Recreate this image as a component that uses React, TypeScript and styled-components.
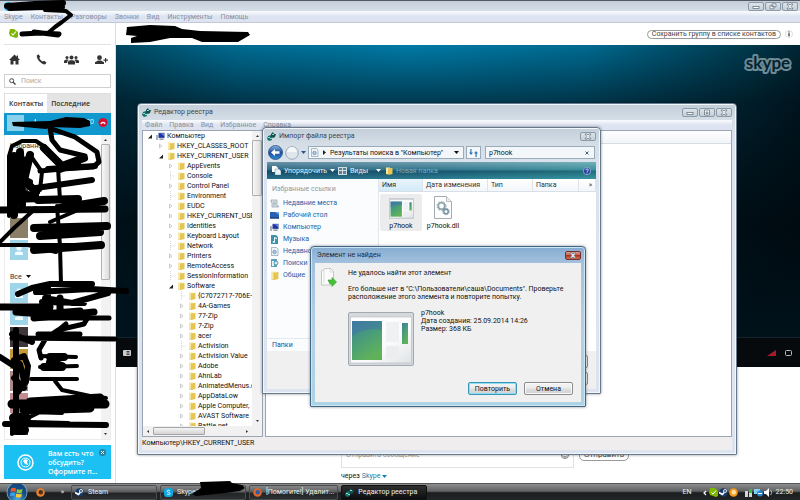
import React from "react";
import styled, { createGlobalStyle, css } from "styled-components";

const Global = createGlobalStyle`
  * { box-sizing: border-box; }
  body { margin: 0; font-family: Roboto, "Noto Sans", sans-serif; font-size: 7px; line-height: 10px; color: #111; overflow: hidden; }
  button, input { font: inherit; color: inherit; margin: 0; padding: 0; border: 0; background: none; outline: 0; white-space: nowrap; }
  svg { display: block; flex: none; }
  ul { list-style: none; margin: 0; padding: 0; }
  p, h2, h3 { margin: 0; font-weight: 400; font-size: 7px; }
`;

const Desktop = styled.div`
  position: relative;
  display: flex;
  flex-direction: column;
  height: 100vh;
  overflow: hidden;
  background: #fff;
`;

/* ---------- shared window parts ---------- */

const Frame = styled.section<{ $x: number; $y: number; $w: number; $h: number; $active?: boolean }>`
  position: absolute;
  left: ${(p) => p.$x}px;
  top: ${(p) => p.$y}px;
  width: ${(p) => p.$w}px;
  height: ${(p) => p.$h}px;
  display: flex;
  flex-direction: column;
  padding: 0 4px 4px;
  overflow: hidden;
  border: 1px solid ${(p) => (p.$active ? "#3f6886" : "#65788c")};
  border-radius: 4px 4px 1px 1px;
  box-shadow: inset 0 0 0 1px ${(p) => (p.$active ? "#cbe6f2" : "#f2f7fb")}, 0 0 3px rgba(0, 0, 0, 0.45);
  background: ${(p) =>
    p.$active
      ? "linear-gradient(#86acd0, #a3c1de 16px, #b5cfe6 50%, #acd3e4)"
      : "linear-gradient(#c2ced9, #d5dee7 16px, #dbe3ee 40px, #dde4f0)"};
`;

const TitleBar = styled.header<{ $h: number }>`
  display: flex;
  align-items: center;
  gap: 3px;
  height: ${(p) => p.$h}px;
  flex: none;
  color: #3b4753;
`;

const Title = styled.h2`
  flex: 1;
  white-space: nowrap;
`;

const WinButtons = styled.div`
  display: flex;
  gap: 1px;
`;

const WinButton = styled.button<{ $danger?: boolean }>`
  display: grid;
  place-items: center;
  width: 16px;
  height: 9px;
  border: 1px solid ${(p) => (p.$danger ? "#7c2f2a" : "#8b99a8")};
  border-radius: 2px;
  background: ${(p) =>
    p.$danger ? "linear-gradient(#dba39a, #c4594a 45%, #ae3422 50%, #cf6f52)" : "linear-gradient(#dde4ea, #c4cfd9)"};
`;

const MenuBar = styled.nav<{ $pad: number; $gap: number; $h: number }>`
  display: flex;
  align-items: center;
  gap: ${(p) => p.$gap}px;
  height: ${(p) => p.$h}px;
  padding-left: ${(p) => p.$pad}px;
  flex: none;
  color: #8a8f9c;
  background: linear-gradient(#fafcfe, #dde3f0 50%, #dde3f0);
`;

function Glyph({ kind }: { kind: "min" | "max" | "restore" | "close" }) {
  return (
    <svg width="8" height="7" viewBox="0 0 8 7" fill="#fff" stroke="#6a7683" strokeWidth="0.8">
      {kind === "min" && <rect x="1" y="3.5" width="6" height="2" />}
      {kind === "max" && <path d="M1.5 1h5v5h-5zM3 3h2v1.5H3z" />}
      {kind === "restore" && <path d="M3 .8h4v3H3zM1 2.8h4v3H1z" />}
      {kind === "close" && <path d="M1 1h2l1 1.2L5 1h2L5.2 3.5 7 6H5L4 4.8 3 6H1l1.8-2.5z" />}
    </svg>
  );
}

function WindowControls({ middle = "max" }: { middle?: "max" | "restore" }) {
  return (
    <WinButtons>
      <WinButton aria-label="Свернуть"><Glyph kind="min" /></WinButton>
      <WinButton aria-label="Развернуть"><Glyph kind={middle} /></WinButton>
      <WinButton aria-label="Закрыть"><Glyph kind="close" /></WinButton>
    </WinButtons>
  );
}

/* ---------- icons ---------- */

const RegIcon = () => (
  <svg width="9" height="9" viewBox="0 0 9 9">
    <path d="M1 4l3-1 1 1v4L2 9 0 7z" fill="#1b6f6c" />
    <path d="M4 2l2-2 1 2 2 0-1 3-2 1-2-1z" fill="#15514f" />
    <path d="M1 5h2v1H1zM3 6h2v1H3zM5 2h2v1H5z" fill="#7fe0cf" />
  </svg>
);
const Folder = ({ s = 8 }: { s?: number }) => (
  <svg width={s} height={s} viewBox="0 0 8 8">
    <path d="M1 0.500H5V7H1z" fill="#f7e9a4" />
    <path d="M3.500 1.500L7.500 0.800V7L3.500 8z" fill="#e6c550" />
    <path d="M1 7L3.500 8V1.500" fill="none" stroke="#d2ae3e" strokeWidth=".5" />
  </svg>
);
const Computer = () => (
  <svg width="9" height="9" viewBox="0 0 9 9">
    <path d="M0 3h2v5H0z" fill="#a9b2ba" />
    <path d="M2.500 1h6v5h-6z" fill="#2231a8" stroke="#8ea0c0" strokeWidth=".6" />
    <path d="M5 1.500h3v2.500z" fill="#6f8cf0" />
    <path d="M4 6.500h3l1 1.500H3z" fill="#9aa3ac" />
  </svg>
);
const Caret = ({ color = "#111" }: { color?: string }) => (
  <svg width="5" height="3" viewBox="0 0 5 3"><path d="M0 0h5L2.500 3z" fill={color} /></svg>
);
const PlaceIcon = ({ kind }: { kind: string }) => {
  if (kind === "folder") return <Folder s={9} />;
  if (kind === "computer") return <Computer />;
  return (
    <svg width="9" height="9" viewBox="0 0 9 9">
      {kind === "recent" && <path d="M1 1h6v6h1.500v1H2V3H1z" fill="#dce5ea" stroke="#8d9ca6" strokeWidth=".7" />}
      {kind === "recent" && <path d="M3 3h3M3 4.500h3M3 6h3" stroke="#8d9ca6" strokeWidth=".6" />}
      {kind === "desktop" && <><path d="M0 1h9v6.500H0z" fill="#2761b4" /><path d="M0 6.500h9v1H0z" fill="#16325d" /><path d="M5 1h4v3z" fill="#6da5e0" /></>}
      {kind === "music" && <><path d="M1 0h5l2 2v7H1z" fill="#3d90a8" /><path d="M4 2l3 1v1L5 3.500V7a1.200 1 0 1 1-1-1z" fill="#e5fafd" /></>}
      {kind === "changed" && <><path d="M1.500.5h5l1.500 1.500v6.500h-6.500z" fill="#eef4f8" stroke="#8ba0b0" strokeWidth=".7" /><circle cx="4.500" cy="5" r="1.800" fill="#a7c6dd" stroke="#5c87a8" strokeWidth=".6" /></>}
      {kind === "search" && <><path d="M1 0h6v8H1z" fill="#5fa3b8" /><path d="M2 2h2v5H2z" fill="#e3f4f8" /><circle cx="6" cy="4" r="2" fill="#d5ecf7" stroke="#357693" strokeWidth=".7" /></>}
    </svg>
  );
};

/* ---------- Skype ---------- */

const SkypeWindow = styled.main`
  flex: 1;
  min-height: 0;
  display: flex;
  flex-direction: column;
`;
const SkypeTitle = styled.header`
  display: flex;
  align-items: center;
  justify-content: space-between;
  height: 11px;
  flex: none;
  padding: 0 2px 0 4px;
  border-top: 1px solid #545b66;
  background: linear-gradient(#c3ced9, #d7dfe8);
`;
const SkypeBody = styled.div`
  display: flex;
  flex: 1;
  min-height: 0;
  border-top: 1px solid #c3c9d4;
`;
const Sidebar = styled.aside`
  width: 116px;
  flex: none;
  display: flex;
  flex-direction: column;
  padding: 0 4px 4px;
  border-right: 1px solid #dcdcdc;
`;
const Status = styled.div`
  height: 22px;
  flex: none;
  display: flex;
  align-items: center;
  padding-left: 5px;
  border-bottom: 1px solid #e2e2e2;
`;
const IconNav = styled.nav`
  display: flex;
  align-items: center;
  justify-content: space-between;
  height: 29px;
  flex: none;
  padding: 0 3px 0 5px;
`;
const IconButton = styled.button`
  display: grid;
  place-items: center;
`;
const SearchLabel = styled.label`
  display: flex;
  align-items: center;
  gap: 5px;
  height: 14px;
  flex: none;
  padding-left: 4px;
  border: 1px solid #d0d0d0;
  input { width: 80px; }
  input::placeholder { color: #aaa; opacity: 1; }
`;
const Tabs = styled.div`
  display: flex;
  height: 20px;
  flex: none;
  margin-top: 5px;
  border: 1px solid #e0e0e0;
  border-bottom: 0;
`;
const Tab = styled.button<{ $on?: boolean }>`
  flex: ${(p) => (p.$on ? "none" : 1)};
  padding: 0 4px;
  text-align: left;
  font-family: "Open Sans", "Noto Sans", sans-serif;
  font-weight: 600;
  color: #333;
  background: ${(p) => (p.$on ? "#fff" : "#e4e4e4")};
`;
const CallRow = styled.div`
  display: flex;
  align-items: center;
  justify-content: space-between;
  height: 22px;
  flex: none;
  padding: 0 3px 4px 3px;
  color: #d4effa;
  background: #1198cf;
`;
const Contacts = styled.div`
  flex: 1;
  min-height: 0;
  display: flex;
  border: 1px solid #ececec;
  border-top: 0;
`;
const ContactScroll = styled.div`
  flex: 1;
  min-width: 0;
  overflow: hidden;
  padding: 4px 0 0 5px;
`;
const GroupTitle = styled.h3`
  display: flex;
  align-items: center;
  gap: 4px;
  height: 13px;
  color: #333;
`;
const AvatarList = styled.ul`
  display: grid;
  gap: 2px;
  margin-bottom: 10px;
`;
const Avatar = styled.li<{ $bg: string }>`
  display: grid;
  place-items: center;
  width: 18px;
  height: 20px;
  background: ${(p) => p.$bg};
`;
const Scrollbar = styled.div<{ $w: number }>`
  width: ${(p) => p.$w}px;
  flex: none;
  display: flex;
  flex-direction: column;
  align-items: center;
  padding: 4px 0;
  gap: 3px;
  background: #f2f2f2;
`;
const Thumb = styled.div<{ $h: number }>`
  width: 100%;
  height: ${(p) => p.$h}px;
  border: 1px solid #b0b0b0;
  border-radius: 1px;
  background: linear-gradient(90deg, #f7f7f7, #dcdcdc);
`;
const Grow = styled.div`flex: 1;`;
const Promo = styled.div`
  display: flex;
  align-items: center;
  height: 34px;
  flex: none;
  margin-top: 5px;
  padding: 0 5px 0 13px;
  gap: 14px;
  color: #fff;
  background: #1cc0f3;
  line-height: 9px;
`;
const PromoText = styled.a`
  flex: 1;
  min-width: 0;
  color: #fff;
  font-family: "Open Sans", "Noto Sans", sans-serif;
  font-weight: 600;
  text-decoration: none;
  white-space: nowrap;
`;
const PromoClose = styled.button`
  align-self: flex-start;
  margin: 4px 0 0 -14px;
`;

const Conversation = styled.div`
  flex: 1;
  min-width: 0;
  display: flex;
  flex-direction: column;
`;
const ConvHeader = styled.header`
  display: flex;
  align-items: center;
  justify-content: flex-end;
  gap: 4px;
  height: 22px;
  flex: none;
  padding-right: 7px;
`;
const Pill = styled.button<{ $h: number }>`
  height: ${(p) => p.$h}px;
  padding: 0 4px;
  border: 1px solid #9a9a9a;
  border-radius: 5px;
  line-height: 7px;
  color: #444;
  background: #fff;
`;
const SendPill = styled(Pill)`
  width: 50px;
  font-size: 8px;
  line-height: 11px;
  color: #444;
`;
const Video = styled.div`
  display: flex;
  flex-direction: column;
  height: 322px;
  flex: none;
  background:
    linear-gradient(rgba(0, 5, 10, 0), rgba(0, 5, 10, 0.5) 55px, rgba(0, 8, 14, 0.85) 180px, rgba(0, 20, 30, 0.8)),
    radial-gradient(ellipse 440px 420px at 43% 0, #007aa6, #006a90 40%, #003a4e 76%, #00131c);
`;
const VideoLogo = styled.div`
  flex: 1;
  display: flex;
  justify-content: flex-end;
  padding: 8px 8px;
`;
const VideoBar = styled.div`
  display: flex;
  align-items: center;
  gap: 9px;
  height: 30px;
  padding: 0 7px;
  border-top: 1px solid #14242c;
  background: #060a0d;
`;
const Composer = styled.div`
  flex: 1;
  display: flex;
  flex-direction: column;
  justify-content: flex-end;
  gap: 3px;
  padding: 0 171px 2px 225px;
`;
const ComposeRow = styled.div`
  display: flex;
  gap: 5px;
  height: 27px;
  align-items: center;
`;
const MessageBox = styled.label`
  display: flex;
  flex: 1;
  align-items: center;
  height: 100%;
  padding: 0 4px;
  border: 1px solid #e2e2e2;
  input { flex: 1; min-width: 0; }
  input::placeholder { color: #999; opacity: 1; }
`;
const Via = styled.div`
  display: flex;
  align-items: center;
  gap: 2px;
  height: 10px;
  a { color: #1a80a8; text-decoration: none; }
`;

const Person = () => (
  <svg width="10" height="12" viewBox="0 0 10 12"><circle cx="5" cy="4" r="2.600" fill="#f3fcff" /><path d="M1 11V8.500l2.500-1h3l2.500 1V11z" fill="#f3fcff" /></svg>
);

const photoA = ["#fff", "#4b4146", "#fff", "#8b7f68", "#9fd5e8"];
const photoB = ["#9fd5e8", "#9fd5e8", "#3e3638", "#c49a3a", "#a98a88", "#c08b91", "#27306b"];

function SkypeSidebar() {
  return (
    <Sidebar>
      <Status>
        <svg width="9" height="9" viewBox="0 0 9 9"><path d="M1 0h4l4 3v5L7 9 1 7 0 4z" fill="#7db700" /><path d="M2.500 4.500L4 6l3-3.500" fill="none" stroke="#fff" strokeWidth="1.100" /></svg>
      </Status>
      <IconNav>
        <IconButton aria-label="Домой">
          <svg width="11" height="11" viewBox="0 0 11 11"><path d="M5.500.5L0 6h1.500v4.500H4.500V7h2v3.500h3V6H11L9 4V1.500H7.700v1.200z" fill="#333" /></svg>
        </IconButton>
        <IconButton aria-label="Позвонить">
          <svg width="11" height="11" viewBox="0 0 11 11"><path d="M.8 1.500L2.500.3l1.800 2.500-1 1.200c.6 1.400 1.900 2.700 3.300 3.500l1.500-.8 2.400 1.700-1.200 1.900C7 11.200.3 6 .8 1.500z" fill="#333" /></svg>
        </IconButton>
        <IconButton aria-label="Группа">
          <svg width="15" height="10" viewBox="0 0 15 10" fill="#333"><circle cx="7.500" cy="2.500" r="2" /><circle cx="3" cy="2.600" r="1.500" /><circle cx="12" cy="2.600" r="1.500" /><path d="M4 9.500V6.500l2-1.300h3l2 1.300v3zM0 8V5.700L2 4.500h2l.8.600L3.300 6.300V8zM15 8V5.700L13 4.500h-2l-.8.600 1.500 1.200V8z" /></svg>
        </IconButton>
        <IconButton aria-label="Добавить контакт">
          <svg width="13" height="10" viewBox="0 0 13 10" fill="#333"><circle cx="4.500" cy="2.700" r="2.400" /><path d="M0 9V7.200l3-1.700h3l3 1.700V9zM10 3h1.200v1.600H13v1.200h-1.800v1.600H10V5.800H8.500V4.600H10z" /></svg>
        </IconButton>
      </IconNav>
      <SearchLabel>
        <svg width="7" height="7" viewBox="0 0 7 7" fill="none" stroke="#444"><circle cx="2.700" cy="2.700" r="2" strokeWidth="1" /><path d="M4.200 4.200L6.500 6.500" strokeWidth="1.400" /></svg>
        <input aria-label="Поиск" placeholder="Поиск" />
      </SearchLabel>
      <Tabs>
        <Tab $on>Контакты</Tab>
        <Tab>Последние</Tab>
      </Tabs>
      <CallRow>
        <svg width="18" height="17" viewBox="0 0 18 17"><rect y="1" width="17" height="16" fill="#8bd0ec" /></svg>
        <svg width="18" height="6" viewBox="0 0 18 6"><path d="M10 0h1v3h2v1L11 6 9 4z" fill="#c9ebf8" /></svg>
        <Grow />
        <span>20</span>
        <IconButton aria-label="Завершить звонок">
          <svg width="14" height="9" viewBox="0 0 14 9"><circle cx="9" cy="4.500" r="4.500" fill="#d31132" /><path d="M6.500 6c0-3 5-3 5 0l-1 .3-.7-1.100H8.200l-.7 1.100z" fill="#fff" /></svg>
        </IconButton>
      </CallRow>
      <Contacts>
        <ContactScroll>
          <GroupTitle>Избранное</GroupTitle>
          <AvatarList>{photoA.map((c, i) => <Avatar key={i} $bg={c}>{c === "#9fd5e8" && <Person />}</Avatar>)}</AvatarList>
          <GroupTitle>Все <Caret /></GroupTitle>
          <AvatarList>{photoB.map((c, i) => <Avatar key={i} $bg={c}>{c === "#9fd5e8" && <Person />}</Avatar>)}</AvatarList>
        </ContactScroll>
        <Scrollbar $w={9}>
          <svg width="3" height="2" viewBox="0 0 3 2"><path d="M0 2h3L1.500 0z" fill="#333" /></svg>
          <Thumb $h={136} />
          <Grow />
          <svg width="3" height="2" viewBox="0 0 3 2"><path d="M0 0h3L1.500 2z" fill="#333" /></svg>
        </Scrollbar>
      </Contacts>
      <Promo>
        <svg width="17" height="17" viewBox="0 0 17 17" fill="none" stroke="#fff"><circle cx="8.500" cy="8.500" r="7.500" strokeWidth="1.500" /><circle cx="8.500" cy="8.500" r="4.500" strokeWidth="1" /><path d="M6 7l2-2 3 1-1 2 1 3-3-1z" fill="#fff" stroke="none" /></svg>
        <PromoText href="#">Вам есть что<br />обсудить?<br />Оформите п...</PromoText>
        <PromoClose aria-label="Закрыть">
          <svg width="7" height="7" viewBox="0 0 7 7"><circle cx="3.500" cy="3.500" r="3.500" fill="#2b7fa0" /><path d="M2 2l3 3M5 2L2 5" stroke="#fff" strokeWidth="1" /></svg>
        </PromoClose>
      </Promo>
    </Sidebar>
  );
}

function Skype() {
  return (
    <SkypeWindow>
      <SkypeTitle>
        <svg width="9" height="9" viewBox="0 0 9 9"><circle cx="4.500" cy="4.500" r="4.500" fill="#12a5df" /></svg>
        <WindowControls middle="restore" />
      </SkypeTitle>
      <MenuBar $pad={4} $gap={8} $h={11}>
        {["Skype", "Контакты", "Разговоры", "Звонки", "Вид", "Инструменты", "Помощь"].map((t) => <button key={t}>{t}</button>)}
      </MenuBar>
      <SkypeBody>
        <SkypeSidebar />
        <Conversation>
          <ConvHeader>
            <Pill $h={9}>Сохранить группу в списке контактов</Pill>
            <svg width="8" height="8" viewBox="0 0 8 8"><circle cx="4" cy="4" r="3.500" fill="#fff" stroke="#ddd" /><path d="M4 1.500v1M4 3.300v3" stroke="#222" strokeWidth="1.200" /></svg>
          </ConvHeader>
          <Video>
            <VideoLogo>
              <svg width="48" height="30" viewBox="0 0 48 30" role="img" aria-label="skype">
                <text x="24" y="16" textAnchor="middle" fontFamily="Lato, sans-serif" fontWeight="700" fontSize="17" fill="#03222e" stroke="#6d8b96" strokeWidth="4" strokeLinejoin="round" paintOrder="stroke">skype</text>
              </svg>
            </VideoLogo>
            <VideoBar>
              <svg width="8" height="6" viewBox="0 0 8 6"><rect width="8" height="6" rx="1" fill="#ccc" /><path d="M3.500 1.500h3M3.500 3h3M3.500 4.500h3" stroke="#222" strokeWidth=".8" /></svg>
              <Grow />
              <svg width="9" height="6" viewBox="0 0 9 6"><path d="M0 6L9 0v6z" fill="#a81a2c" /></svg>
              <svg width="8" height="6" viewBox="0 0 8 6"><rect x=".5" y=".5" width="6" height="5" rx="1" fill="none" stroke="#bbb" /></svg>
            </VideoBar>
          </Video>
          <Composer>
            <ComposeRow>
              <MessageBox>
                <input aria-label="Сообщение" placeholder="Отправить сообщение" />
                <svg width="8" height="8" viewBox="0 0 8 8" fill="none" stroke="#777"><circle cx="4" cy="4" r="3.500" /><path d="M2 4.500c1 2 3 2 4 0" /></svg>
              </MessageBox>
              <SendPill $h={13}>Отправить</SendPill>
            </ComposeRow>
            <Via>через <a href="#">Skype</a> <Caret color="#1a80a8" /></Via>
          </Composer>
        </Conversation>
      </SkypeBody>
    </SkypeWindow>
  );
}

/* ---------- Registry editor ---------- */

const RegBody = styled.div`
  flex: 1;
  min-height: 0;
  display: flex;
  gap: 2px;
  background: #e9edf3;
`;
const TreePane = styled.div`
  width: 121px;
  flex: none;
  display: flex;
  flex-direction: column;
  background: #fff;
  border: 1px solid #9aa5b1;
`;
const TreeTop = styled.div`
  flex: 1;
  min-height: 0;
  display: flex;
`;
const Tree = styled.ul`
  flex: 1;
  min-width: 0;
  overflow: hidden;
`;
const Node = styled.li<{ $level: number }>`
  display: flex;
  align-items: center;
  gap: 2px;
  height: 10px;
  padding-left: ${(p) => [3, 14, 24, 35][p.$level]}px;
  white-space: nowrap;
`;
const HScroll = styled.div`
  display: flex;
  align-items: center;
  gap: 4px;
  height: 10px;
  flex: none;
  padding: 0 14px 0 4px;
  background: #f1f1f1;
`;
const HThumb = styled.div`
  width: 52px;
  height: 8px;
  border: 1px solid #a5a5a5;
  border-radius: 1px;
  background: linear-gradient(#f5f5f5, #d2d2d2);
`;
const ValuePane = styled.div`
  flex: 1;
  background: #fff;
  border: 1px solid #9aa5b1;
`;
const ValueHead = styled.div`
  height: 13px;
  border-bottom: 1px solid #d5dbe3;
  background: linear-gradient(#fff, #f1f4f8);
`;
const StatusBar = styled.footer`
  height: 13px;
  flex: none;
  line-height: 13px;
  background: #efeded;
`;

type Row = [number, string, "o" | "c" | ""];
const tree: Row[] = [
  [0, "Компьютер", "o"], [1, "HKEY_CLASSES_ROOT", "c"], [1, "HKEY_CURRENT_USER", "o"],
  [2, "AppEvents", "c"], [2, "Console", ""], [2, "Control Panel", "c"], [2, "Environment", ""], [2, "EUDC", "c"],
  [2, "HKEY_CURRENT_USER", "c"], [2, "Identities", "c"], [2, "Keyboard Layout", "c"], [2, "Network", ""],
  [2, "Printers", "c"], [2, "RemoteAccess", "c"], [2, "SessionInformation", ""], [2, "Software", "o"],
  [3, "{C7072717-706E-4", ""], [3, "4A-Games", "c"], [3, "77-Zip", "c"], [3, "7-Zip", "c"], [3, "acer", "c"],
  [3, "Activision", ""], [3, "Activision Value", "c"], [3, "Adobe", "c"], [3, "AhnLab", "c"],
  [3, "AnimatedMenus.c", "c"], [3, "AppDataLow", "c"], [3, "Apple Computer,", "c"], [3, "AVAST Software", "c"], [3, "Battle.net", "c"],
];

const Expander = ({ state }: { state: Row[2] }) => (
  <svg width="8" height="10" viewBox="0 0 8 10">
    {state === "o" && <path d="M6 3.500v4H2z" fill="#222" />}
    {state === "c" && <path d="M2.500 3v4l2.500-2z" fill="#fff" stroke="#aaa" strokeWidth=".6" />}
    {state === "" && <path d="M3.500 0v10M3.500 5H8" stroke="#bbb" strokeWidth=".6" strokeDasharray="1 1" fill="none" />}
  </svg>
);

function Registry() {
  return (
    <Frame $x={137} $y={103} $w={600} $h={352}>
      <TitleBar $h={16}>
        <RegIcon />
        <Title>Редактор реестра</Title>
        <WindowControls />
      </TitleBar>
      <MenuBar $pad={3} $gap={7} $h={10}>
        {["Файл", "Правка", "Вид", "Избранное", "Справка"].map((t) => <button key={t}>{t}</button>)}
      </MenuBar>
      <RegBody>
        <TreePane>
          <TreeTop>
            <Tree>
              {tree.map(([level, name, state], i) => (
                <Node key={i} $level={level}>
                  <Expander state={state} />
                  {level === 0 ? <Computer /> : <Folder />}
                  <span>{name}</span>
                </Node>
              ))}
            </Tree>
            <Scrollbar $w={10}>
              <svg width="3" height="2" viewBox="0 0 3 2"><path d="M0 2h3L1.500 0z" fill="#333" /></svg>
              <Thumb $h={56} />
              <Grow />
              <svg width="3" height="2" viewBox="0 0 3 2"><path d="M0 0h3L1.500 2z" fill="#333" /></svg>
            </Scrollbar>
          </TreeTop>
          <HScroll>
            <svg width="2" height="3" viewBox="0 0 2 3"><path d="M2 0v3L0 1.500z" fill="#333" /></svg>
            <HThumb />
            <Grow />
            <svg width="2" height="3" viewBox="0 0 2 3"><path d="M0 0v3l2-1.500z" fill="#333" /></svg>
          </HScroll>
        </TreePane>
        <ValuePane><ValueHead /></ValuePane>
      </RegBody>
      <StatusBar>Компьютер\HKEY_CURRENT_USER</StatusBar>
    </Frame>
  );
}

/* ---------- Import window ---------- */

const NavRow = styled.div`
  display: flex;
  align-items: center;
  gap: 2px;
  height: 17px;
  flex: none;
  padding: 0 1px;
`;
const field = css`
  display: flex;
  align-items: center;
  height: 13px;
  border: 1px solid #9aabb9;
  background: #f3f7fa;
`;
const Address = styled.div`
  ${field}
  flex: 1;
  gap: 4px;
  padding: 0 4px 0 1px;
  white-space: nowrap;
`;
const Refresh = styled.button`
  ${field}
  width: 15px;
  justify-content: center;
`;
const SearchField = styled.label`
  ${field}
  width: 110px;
  margin-left: 2px;
  padding: 0 5px 0 3px;
  input { flex: 1; min-width: 0; }
`;
const Toolbar = styled.div`
  display: flex;
  align-items: center;
  gap: 4px;
  height: 17px;
  flex: none;
  margin-top: 1px;
  padding: 0 5px;
  color: #e8f5f9;
  background:
    linear-gradient(rgba(255, 255, 255, 0.35), rgba(255, 255, 255, 0.08) 48%, rgba(0, 20, 40, 0.25) 52%, rgba(120, 230, 230, 0.15)),
    linear-gradient(90deg, #1a5877, #1f6983 50%, #2b8793);
`;
const ToolButton = styled.button<{ $dim?: boolean; $w: number }>`
  display: flex;
  align-items: center;
  gap: 3px;
  width: ${(p) => p.$w}px;
  color: ${(p) => (p.$dim ? "#7ba9b8" : "inherit")};
  span { flex: 1; text-align: left; }
`;
const Explorer = styled.div`
  flex: 1;
  min-height: 0;
  display: flex;
  background: #fff;
`;
const Places = styled.aside`
  width: 112px;
  flex: none;
  display: flex;
  flex-direction: column;
  border-right: 1px solid #dfe6ed;
  background: #fafcfe;
`;
const PlacesTitle = styled.h3`
  padding: 5px 5px 3px;
  line-height: 10px;
  color: #8a97a4;
`;
const PlaceLink = styled.a`
  display: flex;
  align-items: center;
  gap: 4px;
  height: 12px;
  padding-left: 3px;
  color: #1e5fa8;
  text-decoration: none;
  white-space: nowrap;
`;
const FoldersButton = styled.button`
  height: 13px;
  margin-top: auto;
  padding-left: 5px;
  text-align: left;
  color: #1c4f8c;
  border-top: 1px solid #e3e9f0;
`;
const Files = styled.div`flex: 1; min-width: 0;`;
const Columns = styled.div`
  display: grid;
  grid-template-columns: 44px 65px 45px 46px 1fr;
  height: 13px;
  border-bottom: 1px solid #d9dfe7;
  background: linear-gradient(#fff, #f3f6fa);
`;
const Column = styled.button<{ $sorted?: boolean; $last?: boolean }>`
  padding: 0 3px;
  text-align: ${(p) => (p.$last ? "right" : "left")};
  color: #333;
  border-right: 1px solid #dfe4ea;
  background: ${(p) => (p.$sorted ? "linear-gradient(#e8f4fb, #d3ebf8)" : "none")};
`;
const FileGrid = styled.div`
  display: flex;
  padding: 2px 1px;
`;
const File = styled.button<{ $on?: boolean }>`
  display: flex;
  flex-direction: column;
  align-items: center;
  justify-content: flex-end;
  gap: 2px;
  width: 42px;
  height: 37px;
  border-radius: 2px;
  background: ${(p) => (p.$on ? "#ececec" : "none")};
`;
const ImportFooter = styled.footer`
  height: 38px;
  flex: none;
  display: flex;
  flex-direction: column;
  align-items: flex-end;
  justify-content: center;
  gap: 4px;
  padding-right: 8px;
  background: #f0f0f0;
`;
const PushButton = styled.button<{ $primary?: boolean }>`
  width: 49px;
  height: 13px;
  line-height: 10px;
  border: 1px solid ${(p) => (p.$primary ? "#3796b8" : "#8c8c8c")};
  border-radius: 2px;
  box-shadow: inset 0 0 0 1px ${(p) => (p.$primary ? "#8fdcf3" : "#fafafa")};
  background: linear-gradient(#f4f4f4, #ececec 48%, #dedede 52%, #d2d2d2);
`;

function AppPreview({ w, h }: { w: number; h: number }) {
  return (
    <svg width={w} height={h} viewBox="0 0 66 54" preserveAspectRatio="none">
      <defs>
        <linearGradient id="pv" x1="0" y1="0" x2=".5" y2="1"><stop offset="0" stopColor="#3f7d9c" /><stop offset=".45" stopColor="#469a7c" /><stop offset="1" stopColor="#5fb25a" /></linearGradient>
        <linearGradient id="pf" x1="0" y1="0" x2="1" y2="1"><stop offset="0" stopColor="#fff" /><stop offset=".6" stopColor="#fbfbfb" /><stop offset="1" stopColor="#dfe3e5" /></linearGradient>
      </defs>
      <rect x=".5" y=".5" width="65" height="53" rx="1.500" fill="#d5d8dc" stroke="#a3a9af" />
      <rect x="2.500" y="5" width="61" height="46" fill="url(#pf)" stroke="#b4babf" strokeWidth=".6" />
      <rect x="4" y="9" width="30" height="39" fill="url(#pv)" />
      <path d="M4 24c8-6 18-8 30-6V9H4z" fill="#3f73ab" opacity=".5" />
      <rect x="38" y="10" width="13" height="20" fill="#f0f1f2" />
      <rect x="38" y="34" width="13" height="13" fill="#ebedef" />
      <rect x="54" y="11" width="6" height="21" fill="url(#pv)" />
    </svg>
  );
}

const places: [string, string][] = [
  ["recent", "Недавние места"], ["desktop", "Рабочий стол"], ["computer", "Компьютер"], ["music", "Музыка"],
  ["changed", "Недавно"], ["search", "Поиски"], ["folder", "Общие"],
];

function ImportWindow() {
  return (
    <Frame $x={262} $y={127} $w={339} $h={267}>
      <TitleBar $h={16}>
        <RegIcon />
        <Title>Импорт файла реестра</Title>
        <WinButton aria-label="Закрыть"><Glyph kind="close" /></WinButton>
      </TitleBar>
      <NavRow>
        <IconButton aria-label="Назад">
          <svg width="15" height="15" viewBox="0 0 15 15"><defs><linearGradient id="nb" x1="0" y1="0" x2="0" y2="1"><stop offset="0" stopColor="#8fb6e0" /><stop offset=".5" stopColor="#1d4fa0" /><stop offset="1" stopColor="#2e8fd8" /></linearGradient></defs><circle cx="7.500" cy="7.500" r="7" fill="url(#nb)" stroke="#2c4d7c" strokeWidth=".8" /><path d="M3 7.500L7 4v2.200h4.500v2.600H7V11z" fill="#fff" /></svg>
        </IconButton>
        <IconButton aria-label="Вперёд">
          <svg width="14" height="14" viewBox="0 0 14 14"><circle cx="7" cy="7" r="6.300" fill="#dfe6ec" stroke="#8998a8" strokeWidth=".8" /><path d="M2 6a5 5 0 0 1 10 0z" fill="#f4f7f9" /></svg>
        </IconButton>
        <Caret color="#24588c" />
        <Address>
          <PlaceIcon kind="changed" />
          <svg width="3" height="5" viewBox="0 0 3 5"><path d="M0 0v5l3-2.500z" fill="#222" /></svg>
          <span>Результаты поиска в "Компьютер"</span>
          <Grow />
          <Caret />
        </Address>
        <Refresh aria-label="Обновить">
          <svg width="9" height="8" viewBox="0 0 9 8" fill="#2d75b5"><path d="M2.500 0v3.500H4L2 6 0 3.500h1.300V0zM6.500 8V4.500H5L7 2l2 2.500H7.700V8z" /></svg>
        </Refresh>
        <SearchField>
          <input aria-label="Поиск" defaultValue="p7hook" />
          <svg width="4" height="4" viewBox="0 0 4 4"><path d="M.5.5l3 3M3.500.5l-3 3" stroke="#39658c" /></svg>
        </SearchField>
      </NavRow>
      <Toolbar>
        <ToolButton $w={62}>
          <svg width="9" height="9" viewBox="0 0 9 9"><path d="M0 0h4l2 2v4H0z" fill="#fff" /><path d="M3 3h4l2 2v4H3z" fill="#e9f2f7" stroke="#5e8ea6" strokeWidth=".5" /></svg>
          <span>Упорядочить</span><Caret color="#fff" />
        </ToolButton>
        <ToolButton $w={43}>
          <svg width="9" height="8" viewBox="0 0 9 8"><rect width="9" height="8" fill="#cfdde4" /><path d="M1 1h3v2H1zM5 1h3v2H5zM1 4h3v3H1zM5 4h3v3H5z" fill="#5f8191" /></svg>
          <span>Виды</span><Caret color="#fff" />
        </ToolButton>
        <ToolButton $w={60} $dim><Folder /><span>Новая папка</span></ToolButton>
        <Grow />
        <IconButton aria-label="Справка">
          <svg width="8" height="8" viewBox="0 0 8 8"><circle cx="4" cy="4" r="3.700" fill="#2848a0" stroke="#b8cdf0" strokeWidth=".6" /><path d="M2.800 3c0-1.500 2.600-1.400 2.500 0 0 .8-1.200.9-1.200 1.800M4.100 5.500v.9" stroke="#fff" strokeWidth=".8" fill="none" /></svg>
        </IconButton>
      </Toolbar>
      <Explorer>
        <Places>
          <PlacesTitle>Избранные ссылки</PlacesTitle>
          {places.map(([k, t]) => <PlaceLink key={k} href="#"><PlaceIcon kind={k} />{t}</PlaceLink>)}
          <FoldersButton>Папки</FoldersButton>
        </Places>
        <Files>
          <Columns>
            <Column $sorted>Имя</Column>
            <Column>Дата изменения</Column>
            <Column>Тип</Column>
            <Column>Папка</Column>
            <Column $last>»</Column>
          </Columns>
          <FileGrid>
            <File $on><AppPreview w={25} h={21} />p7hook</File>
            <File>
              <svg width="18" height="23" viewBox="0 0 18 23"><path d="M.5.5h12l5 5v17H.5z" fill="#fdfdfd" stroke="#a5abb0" /><path d="M12.500.5v5h5" fill="#e8eaec" stroke="#a5abb0" strokeWidth=".7" /><circle cx="7.500" cy="10" r="3.200" fill="none" stroke="#8fa3ae" strokeWidth="1.600" /><circle cx="7.500" cy="10" r="4.400" fill="none" stroke="#7d929e" strokeWidth="1" strokeDasharray="1.400 1.400" /><circle cx="12" cy="15.500" r="2.200" fill="none" stroke="#6f93a5" strokeWidth="1.400" /><circle cx="12" cy="15.500" r="3.200" fill="none" stroke="#5f7f90" strokeWidth=".9" strokeDasharray="1.100 1.100" /></svg>
              p7hook.dll
            </File>
          </FileGrid>
        </Files>
      </Explorer>
      <ImportFooter>
        <PushButton aria-label="Открыть" />
        <PushButton aria-label="Отмена" />
      </ImportFooter>
    </Frame>
  );
}

/* ---------- Error dialog ---------- */

const DialogBody = styled.div`
  flex: 1;
  display: grid;
  grid-template-columns: 16px 1fr;
  align-content: start;
  gap: 0 11px;
  padding: 5px 6px 0;
  line-height: 8px;
  background: #f0f0f0;
`;
const Message = styled.div`
  display: flex;
  flex-direction: column;
  gap: 8px;
  padding-top: 1px;
`;
const Details = styled.div`
  display: flex;
  align-items: flex-start;
  gap: 7px;
`;
const PreviewBox = styled.div`padding-top: 3px;`;
const DialogActions = styled.footer`
  display: flex;
  justify-content: flex-end;
  gap: 7px;
  height: 26px;
  flex: none;
  padding: 6px 8px;
  background: #f0f0f0;
`;
const DialogTitle = styled(TitleBar)`
  color: #1d2b3a;
  padding-left: 2px;
`;

function ErrorDialog() {
  return (
    <Frame as="div" role="dialog" aria-label="Элемент не найден" $x={310} $y={246} $w={276} $h={161} $active>
      <DialogTitle $h={16}>
        <Title>Элемент не найден</Title>
        <WinButton $danger aria-label="Закрыть"><Glyph kind="close" /></WinButton>
      </DialogTitle>
      <DialogBody>
        <svg width="16" height="19" viewBox="0 0 16 19"><path d="M.5 3l4-2.500h5l3 3V15l-3 2H.5z" fill="#fbfbfb" stroke="#b4bbb8" strokeWidth=".8" /><path d="M3 2v13M9 1v3h3" stroke="#ccd3d0" strokeWidth=".7" fill="none" /><path d="M7 12h4V9.500l4.500 4.500-4.500 4.500V16H9z" fill="#45c237" stroke="#2f9424" strokeWidth=".6" /></svg>
        <Message>
          <p>Не удалось найти этот элемент</p>
          <p>Его больше нет в "C:\Пользователи\саша\Documents". Проверьте расположение этого элемента и повторите попытку.</p>
          <Details>
            <PreviewBox><AppPreview w={66} h={54} /></PreviewBox>
            <p>p7hook<br />Дата создания: 25.09.2014 14:26<br />Размер: 368 КБ</p>
          </Details>
        </Message>
      </DialogBody>
      <DialogActions>
        <PushButton $primary>Повторить</PushButton>
        <PushButton>Отмена</PushButton>
      </DialogActions>
    </Frame>
  );
}

/* ---------- Taskbar ---------- */

const Bar = styled.footer`
  display: flex;
  align-items: center;
  gap: 3px;
  height: 17px;
  flex: none;
  padding: 0 7px 0 6px;
  color: #eee;
  border-top: 1px solid #555;
  background: linear-gradient(#8b8d8e, #5f6162 45%, #1b1d1e 55%, #232627);
`;
const Quick = styled.div`
  display: flex;
  align-items: center;
  justify-content: space-between;
  width: 28px;
  margin: 0 4px 0 5px;
`;
const Task = styled.button<{ $on?: boolean }>`
  display: flex;
  align-items: center;
  gap: 4px;
  flex: 0 1 86px;
  height: 15px;
  padding: 0 3px;
  border: 1px solid ${(p) => (p.$on ? "#111" : "#4a4c4d")};
  border-radius: 2px;
  background: ${(p) => (p.$on ? "linear-gradient(#2c2e2f, #0c0d0e)" : "linear-gradient(#86888a, #5a5c5d 45%, #222425 55%, #2d3031)")};
`;
const Tray = styled.div`
  display: flex;
  align-items: center;
  gap: 1px;
  margin-left: auto;
`;
const Lang = styled.span`margin-right: 7px;`;
const Clock = styled.time`margin-left: 2px;`;

const Orb = ({ a, b }: { a: string; b: string }) => (
  <svg width="9" height="9" viewBox="0 0 9 9"><circle cx="4.500" cy="4.500" r="4.300" fill={a} /><circle cx="4.800" cy="4.200" r="2.200" fill={b} /></svg>
);
const SteamIcon = () => (
  <svg width="9" height="9" viewBox="0 0 9 9"><circle cx="4.500" cy="4.500" r="4.300" fill="#173a66" /><circle cx="6" cy="3" r="1.500" fill="none" stroke="#fff" strokeWidth=".9" /><path d="M0 4.500L3.500 6.500 5 4.500" stroke="#fff" strokeWidth="1.600" fill="none" /></svg>
);

function Taskbar() {
  return (
    <Bar>
      <IconButton aria-label="Пуск">
        <svg width="22" height="16" viewBox="0 0 22 16"><defs><radialGradient id="orb" cx=".5" cy=".9"><stop offset="0" stopColor="#49b5e8" /><stop offset="1" stopColor="#164a80" /></radialGradient></defs><circle cx="11" cy="8.500" r="10" fill="url(#orb)" stroke="#8eb6cf" strokeWidth=".8" /><path d="M5 4.500c2-1.200 3.500-1 5 0L9.500 8c-1.500-1-3-1-5 0z" fill="#f0592b" /><path d="M11 5c2 1 3.500 1 5.500 0L16 8.500c-2 1-3.500 1-5.500 0z" fill="#8cc63f" /><path d="M4.300 9c2-1.200 3.500-1 5 0L8.800 12.500c-1.500-1-3-1-5 0z" fill="#39a0e8" /><path d="M10.300 9.500c2 1 3.500 1 5.500 0l-.5 3.500c-2 1-3.500 1-5.500 0z" fill="#fcc934" /></svg>
      </IconButton>
      <Quick><Orb a="#e8802c" b="#4a3020" /><span>»</span></Quick>
      <Task><SteamIcon />Steam</Task>
      <Task><svg width="9" height="9" viewBox="0 0 9 9"><rect width="9" height="9" rx="3" fill="#12a5df" /><path d="M6 3C5 1.800 3 2.200 3.200 3.400 3.400 4.600 6 4.200 6 5.600 5.800 7 3.500 6.800 3 5.800" stroke="#fff" fill="none" /></svg>Skype™</Task>
      <Task><Orb a="#e0662a" b="#2d5ca8" />[Помогите!] Удалит...</Task>
      <Task $on><RegIcon />Редактор реестра</Task>
      <Tray>
        <Lang>EN</Lang>
        <svg width="8" height="9" viewBox="0 0 8 9"><path d="M6 3L4 5l2 2" stroke="#fff" strokeWidth="1.200" fill="none" /></svg>
        <svg width="9" height="9" viewBox="0 0 9 9"><path d="M1 0h5l3 3v5L7 9 1 7 0 4z" fill="#7db700" /><path d="M2.500 4.500L4 6l3-3.500" fill="none" stroke="#fff" /></svg>
        <SteamIcon />
        <Orb a="#f49a1c" b="#fde2a0" />
        <svg width="14" height="9" viewBox="0 0 14 9"><path d="M6 3h3v6H6zM10 1h3v8h-3z" fill="#cfd8d2" /><path d="M10 1h3v4h-3z" fill="#3bb54a" /></svg>
        <svg width="9" height="9" viewBox="0 0 9 9"><path d="M0 1h6v5H0z" fill="#7fd0f5" /><circle cx="6" cy="5.500" r="3" fill="#2a86c8" /><path d="M4 5.500h4" stroke="#fff" /></svg>
        <svg width="9" height="9" viewBox="0 0 9 9"><path d="M0 3h2l3-3v9L2 6H0z" fill="#fff" /><path d="M6.500 2c1.500 1.500 1.500 3.500 0 5" stroke="#bbb" fill="none" /></svg>
        <Clock>22:50</Clock>
      </Tray>
    </Bar>
  );
}

/* ---------- hand-drawn redaction marks ---------- */

const Marks = styled.svg`
  position: absolute;
  left: 0;
  top: 0;
  pointer-events: none;
`;

const strokes: [number, string][] = [
  [6, "M7 6L35 4 63 3M10 8L40 7 62 7"],
  [4, "M45 10L66 11 71 15 62 22 55 27 48 33"],
  [5, "M22 34L40 33 59 34M34 32L58 35"],
  [5, "M50 128L52 140 60 150 85 156M52 129L75 137 97 152 99 162 93 167 62 169 40 171"],
  [4, "M45 147L36 141 22 141 12 146 9 156 9 216M30 155L42 172 40 190M58 168L60 200M57 206L60 246 61 284"],
  [8, "M14 156L14 215M20 152L22 205M12 164L28 160M30 155L24 180 36 192M44 148L62 166 84 158"],
  [6, "M48 169L95 166M36 188L92 180M60 170L78 163M10 172L30 182M10 190L36 196M10 200L44 199"],
  [8, "M38 200L78 199M60 208L104 201M34 228L107 226M40 236L100 232M34 250L101 245"],
  [7, "M0 210L105 209"],
  [4, "M0 242L14 228 36 208M0 245L90 245M50 222L78 210M28 245L56 252"],
  [6, "M18 294L32 288 50 284 92 284M36 292L90 289 126 291M45 298L72 303 108 293M48 288L48 312M42 302L84 303"],
  [7, "M0 307L50 307M16 312L42 314 80 311M34 318L94 312M60 298L60 314"],
  [5, "M34 318L109 318"],
  [5, "M88 317L84 324 58 330 46 338 39 350 41 358M66 324L54 334M12 338L115 339M38 334L80 334"],
  [6, "M16 330L16 430M12 334L32 342M0 357L14 366M14 360L24 356 28 366 26 382 18 392M20 364L24 380M14 378L24 388"],
  [4, "M40 356L76 357M40 367L77 366M31 379L77 379M55 381L62 390 90 396 106 398"],
  [8, "M50 357L64 357M50 362L62 366M44 367L62 367"],
  [9, "M12 404L105 404M30 402L100 398M24 410L90 408"],
  [4, "M28 412L62 413M24 420L38 413M12 420L12 434"],
  [6, "M5 424L106 425M30 423L68 424"],
  [10, "M14 424L26 422M16 430L24 430M14 418L26 418"],
];

const blobs = [
  "M12 122L50 121 66 117 84 118 90 121 90 126 80 128 50 127 46 129 13 126z",
  "M127 27L150 25 175 26 182 29 200 31 248 32 250 35 238 42 202 42 192 38 170 38 150 42 131 43 131 38 137 36 126 35z",
  "M200 482L230 481 232 483 242 485 245 488 240 491 225 493 196 496 192 494 201 488z",
];

export default function App() {
  return (
    <Desktop>
      <Global />
      <Skype />
      <Taskbar />
      <Registry />
      <ImportWindow />
      <ErrorDialog />
      <Marks width="800" height="500" viewBox="0 0 800 500" aria-hidden="true">
        {strokes.map(([w, d], i) => <path key={i} d={d} fill="none" stroke="#000" strokeWidth={w} strokeLinecap="round" strokeLinejoin="round" />)}
        {blobs.map((d, i) => <path key={i} d={d} fill="#000" />)}
      </Marks>
    </Desktop>
  );
}
